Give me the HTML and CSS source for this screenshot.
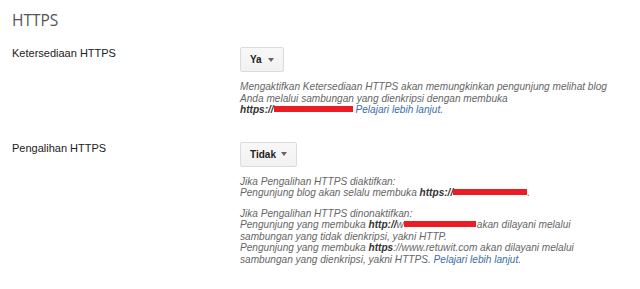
FILE: index.html
```html
<!DOCTYPE html>
<html lang="id">
<head>
    <meta charset="UTF-8">
    <meta name="viewport" content="width=device-width, initial-scale=1.0">
    <title>HTTPS</title>
    <link rel="stylesheet" href="styles.css">
</head>
<body>

<h1 class="title">HTTPS</h1>

<div class="row row-first">
    <div class="label">Ketersediaan HTTPS</div>
    <div class="field">
        <button class="select select-ya" type="button">Ya <span class="arrow"></span></button>
        <p class="desc">
            Mengaktifkan Ketersediaan HTTPS akan memungkinkan pengunjung melihat blog
            Anda melalui sambungan yang dienkripsi dengan membuka<br>
            <b>https://</b><span class="redact redact-a"></span> <a href="#">Pelajari lebih lanjut.</a>
        </p>
    </div>
</div>

<div class="row row-second">
    <div class="label">Pengalihan HTTPS</div>
    <div class="field">
        <button class="select select-tidak" type="button">Tidak <span class="arrow"></span></button>
        <p class="desc">
            Jika Pengalihan HTTPS diaktifkan:<br>
            Pengunjung blog akan selalu membuka <b>https://</b><span class="redact redact-b"></span>.
        </p>
        <p class="desc desc-next">
            Jika Pengalihan HTTPS dinonaktifkan:<br>
            Pengunjung yang membuka <b>http://</b>w<span class="redact redact-c"></span>akan dilayani melalui<br>
            sambungan yang tidak dienkripsi, yakni HTTP.<br>
            Pengunjung yang membuka <b>https</b>://www.retuwit.com akan dilayani melalui<br>
            sambungan yang dienkripsi, yakni HTTPS. <a href="#">Pelajari lebih lanjut.</a>
        </p>
    </div>
</div>

</body>
</html>
```

FILE: styles.css
```css
body {
    margin: 0;
    padding: 10px 0 0 12px;
    background-color: #fff;
    font-family: "Liberation Sans", Arial, sans-serif;
    color: #222;
}
.title {
    margin: 0;
    font-family: "Open Sans", sans-serif;
    font-size: 15.5px;
    font-weight: 400;
    line-height: 20px;
    color: #555;
}
.row {
    display: grid;
    grid-template-columns: 228px 380px;
}
.row-first {
    margin-top: 17px;
}
.row-second {
    margin-top: 26px;
}
.label {
    font-size: 11px;
    color: #222;
}
.field {
    display: flex;
    flex-direction: column;
    align-items: flex-start;
}
.select {
    display: flex;
    align-items: center;
    height: 25px;
    padding: 0 9px;
    background: linear-gradient(#f8f8f8, #f1f1f1);
    border: 1px solid #dcdcdc;
    border-radius: 2px;
    font-family: "Liberation Sans", Arial, sans-serif;
    font-size: 10px;
    font-weight: bold;
    color: #222;
}
.select-ya {
    width: 44px;
}
.select-tidak {
    width: 57px;
}
.arrow {
    width: 0;
    height: 0;
    margin-left: auto;
    border-left: 3px solid transparent;
    border-right: 3px solid transparent;
    border-top: 4px solid #666;
}
.desc {
    margin: 9px 0 0;
    font-size: 10.1px;
    line-height: 11.5px;
    font-style: italic;
    color: #666;
}
.desc b {
    color: #333;
}
.desc a {
    color: #3a6ea5;
    text-decoration: none;
}
.redact {
    display: inline-block;
    height: 6px;
    background: #ec1c24;
    vertical-align: 1px;
}
.redact-a {
    width: 79px;
}
.redact-b {
    width: 74px;
}
.redact-c {
    width: 72px;
    margin-right: 1px;
}
```
